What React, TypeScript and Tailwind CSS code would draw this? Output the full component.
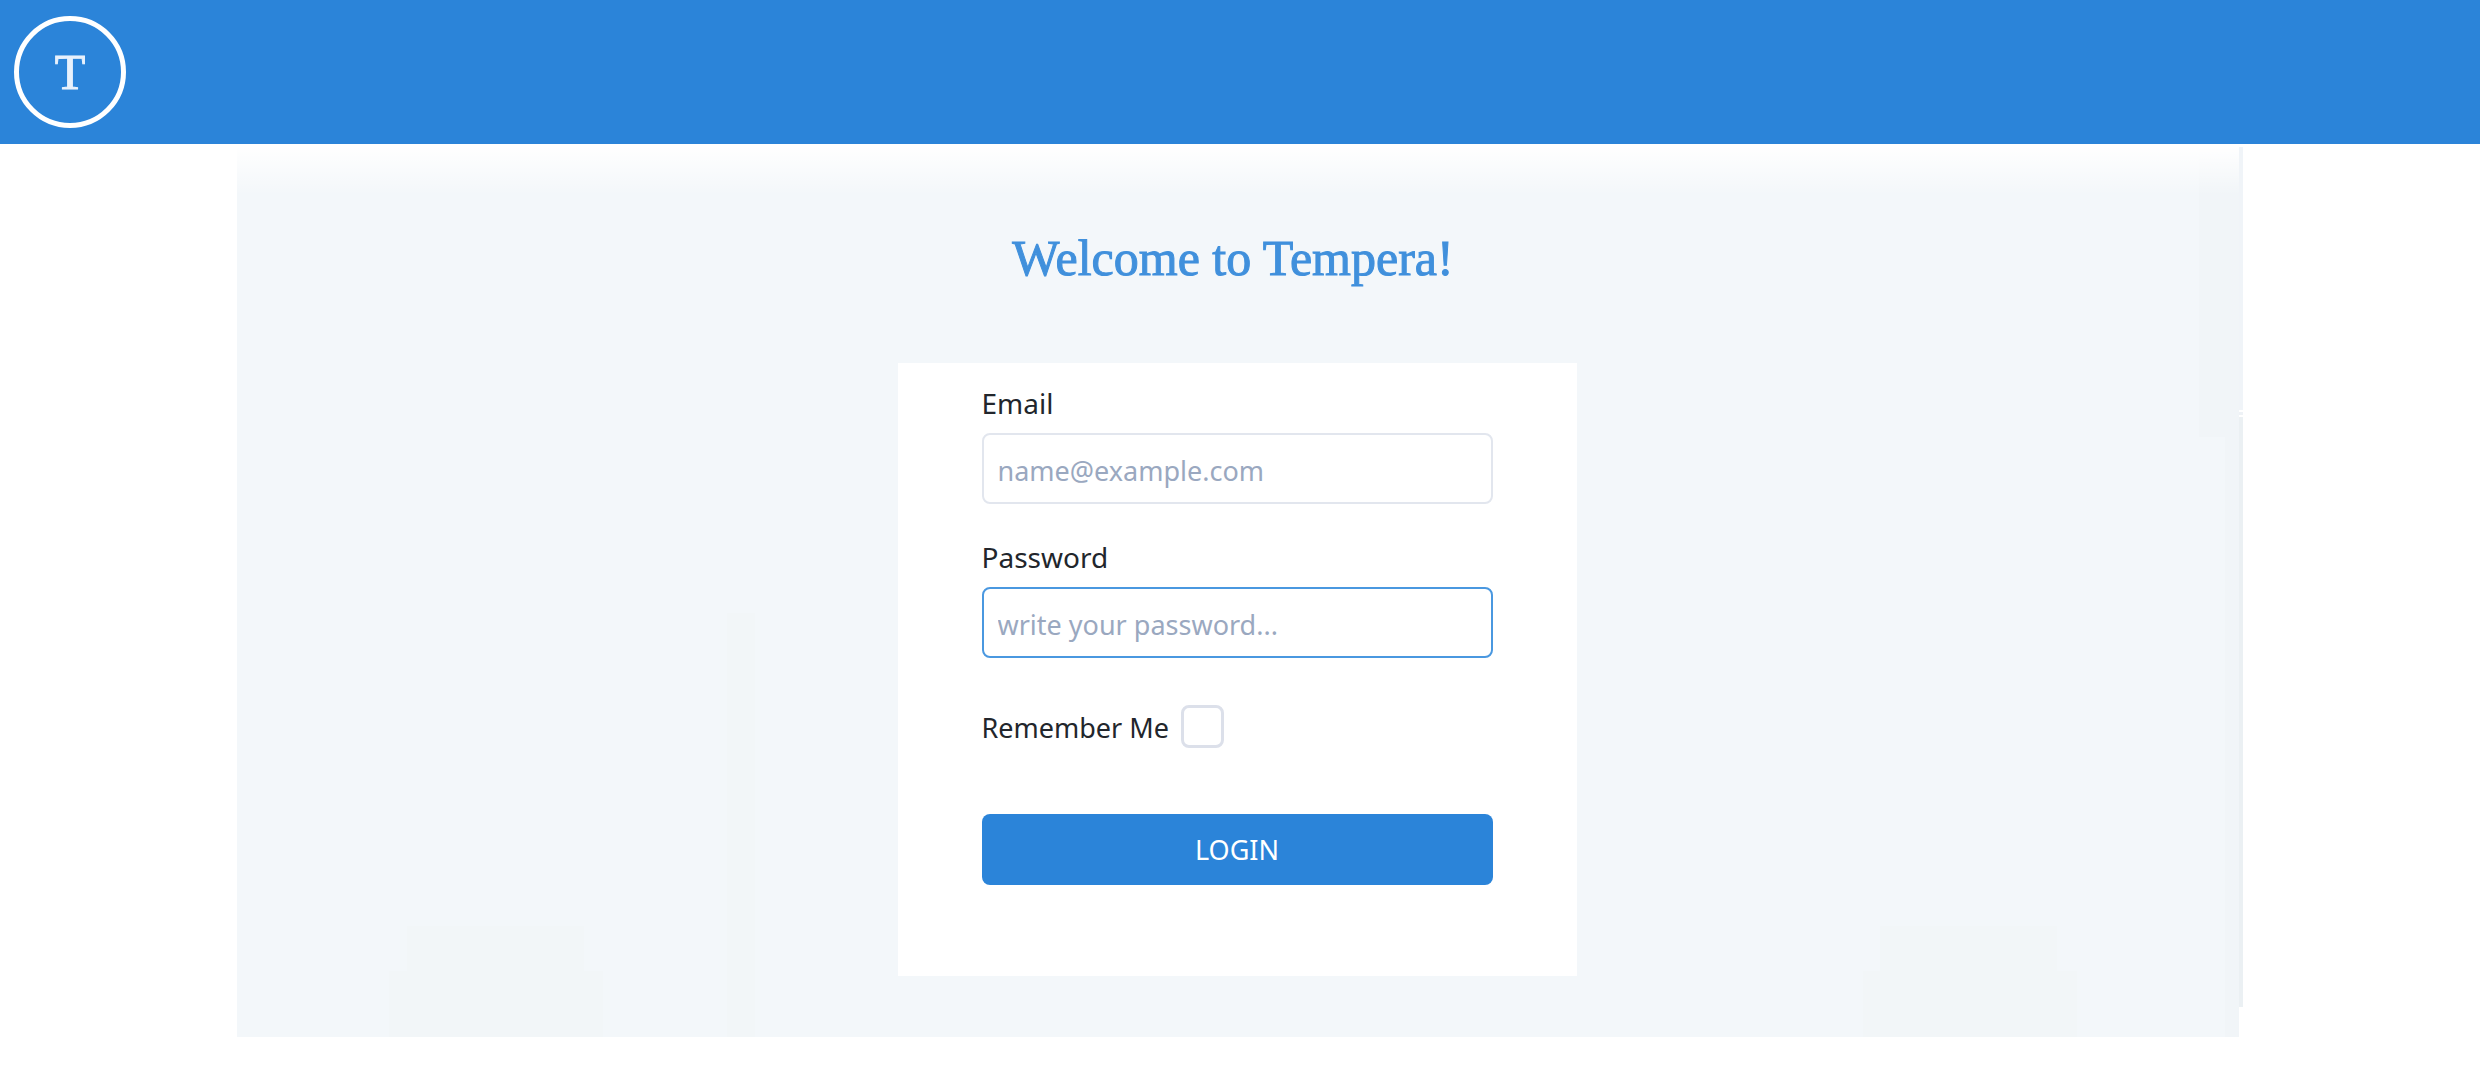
import { useId } from "react";

const inputClass =
  "h-[71px] w-full rounded-lg border-2 bg-white px-3.5 pt-1 text-[27px] text-[#2d3748] outline-none placeholder:text-[#9aa8c0]";

function Field(props: { label: string; type: string; placeholder: string; active?: boolean }) {
  const id = useId();
  return (
    <div className="flex flex-col gap-2.5">
      <label htmlFor={id} className="text-[28px] leading-10">
        {props.label}
      </label>
      <input
        id={id}
        type={props.type}
        placeholder={props.placeholder}
        className={`${inputClass} ${props.active ? "border-[#4a98e0]" : "border-[#e2e6ee]"}`}
      />
    </div>
  );
}

/* Faint tonal blocks behind the form. */
function Backdrop() {
  return (
    <div aria-hidden="true" className="absolute inset-0 overflow-hidden">
      <div className="absolute top-0 right-0 h-[290px] w-10 bg-[#f1f5f8]" />
      <div className="absolute right-0 bottom-0 h-[600px] w-3.5 bg-[#f1f5f8]" />
      <div className="absolute bottom-0 left-[152px] h-[66px] w-[214px] bg-[#f2f6f8]" />
      <div className="absolute bottom-[66px] left-[170px] h-[45px] w-[177px] bg-[#f2f6f8]" />
      <div className="absolute bottom-0 left-[490px] h-[424px] w-7 bg-[#f2f6f8]" />
      <div className="absolute right-[162px] bottom-0 h-[66px] w-[214px] bg-[#f2f6f8]" />
      <div className="absolute right-[182px] bottom-[66px] h-[45px] w-[177px] bg-[#f2f6f8]" />
      <div className="absolute inset-x-0 top-0 h-12 bg-linear-to-b from-white to-[#f3f7fa]/0" />
    </div>
  );
}

export default function App() {
  return (
    <div className="min-h-screen bg-white font-['Noto_Sans',sans-serif] text-[#22262c]">
      <header className="bg-[#2b84d9] px-3.5 py-4">
        <a
          href="#"
          aria-label="Tempera home"
          className="flex size-28 items-center justify-center rounded-full border-[5px] border-white font-['Liberation_Serif',serif] text-[50px] text-[#e8f1fc] [-webkit-text-stroke:1px]"
        >
          T
        </a>
      </header>

      <main className="flex px-[237px] pt-[3px]">
        <section className="relative flex flex-1 flex-col items-center gap-[76px] bg-[#f3f7fa] pt-[82px] pr-0.5 pb-[61px]">
          <Backdrop />
          <h1 className="relative pr-2 font-['Liberation_Serif',serif] text-[50px] leading-[58px] text-[#4090dc] [-webkit-text-stroke:1px]">
            Welcome to Tempera!
          </h1>

          <form
            className="relative flex w-full max-w-[679px] flex-col bg-white px-[84px] pt-5 pb-[91px]"
            onSubmit={(event) => event.preventDefault()}
          >
            <div className="flex flex-col gap-[33px]">
              <Field label="Email" type="email" placeholder="name@example.com" />
              <Field label="Password" type="password" placeholder="write your password..." active />
            </div>
            <div className="mt-[46px] flex items-center gap-3">
              <label htmlFor="remember" className="pt-1 text-[27px] leading-10">
                Remember Me
              </label>
              <input
                id="remember"
                type="checkbox"
                className="size-[43px] appearance-none rounded-lg border-[3px] border-[#dce0ea] bg-white checked:bg-[#2b84d9]"
              />
            </div>
            <button
              type="submit"
              className="mt-[66px] h-[71px] w-full rounded-lg bg-[#2b84d9] pt-0.5 text-[27px] text-white"
            >
              LOGIN
            </button>
          </form>
        </section>
        <div aria-hidden="true" className="mb-[30px] flex w-1 flex-col gap-0.5">
          <div className="h-[263px] bg-[#f0f4f8]" />
          <div className="h-[3px] bg-[#eef2f6]" />
          <div className="flex-1 bg-[#ebf0f3]" />
        </div>
      </main>
    </div>
  );
}
